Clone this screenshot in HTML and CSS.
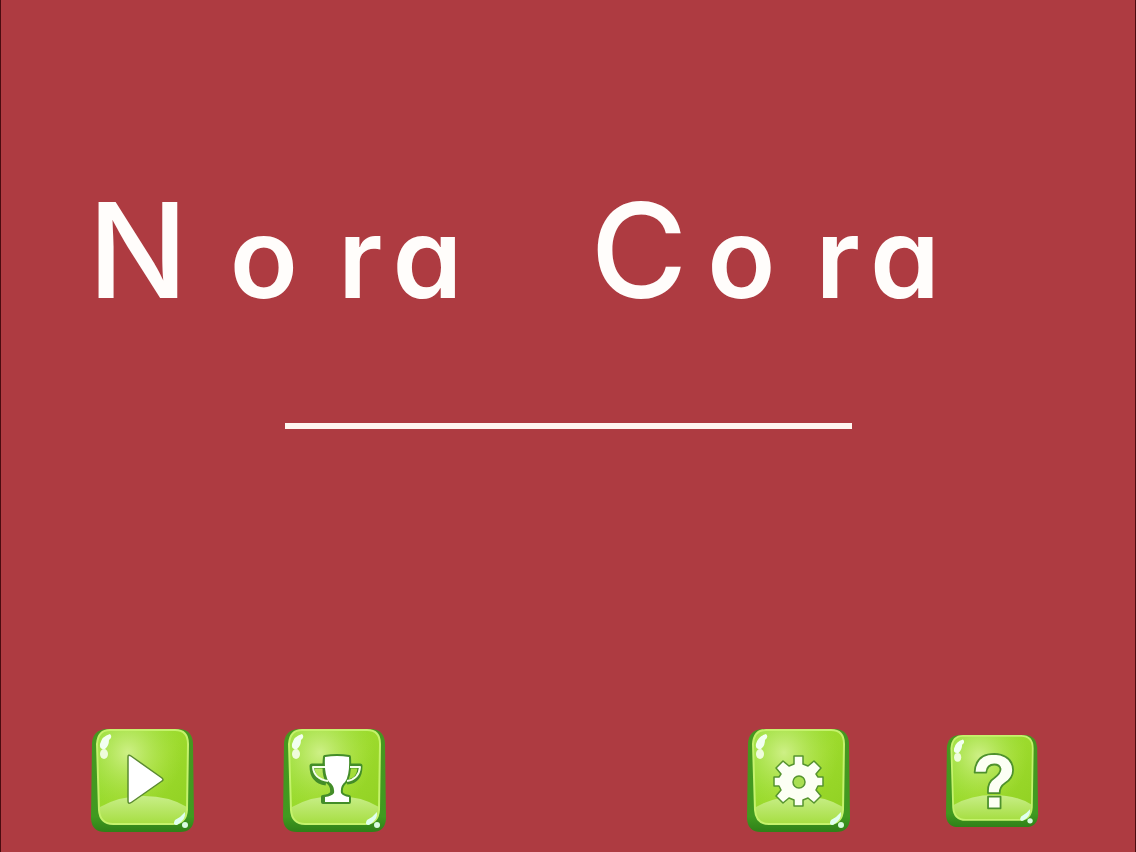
FILE: index.html
```html
<!DOCTYPE html>
<html lang="en">
<head>
  <meta charset="UTF-8">
  <meta name="viewport" content="width=device-width, initial-scale=1.0">
  <title>Nora Cora</title>
  <link rel="stylesheet" href="styles.css">
</head>
<body>
  <!-- Shared glossy button face -->
  <svg class="defs" aria-hidden="true">
    <defs>
      <linearGradient id="face" x1="0" y1="0" x2="1" y2="1">
        <stop offset="0" stop-color="#8fdc32" />
        <stop offset="0.5" stop-color="#9cda2c" />
        <stop offset="1" stop-color="#90d022" />
      </linearGradient>
      <radialGradient id="glow" cx="0.34" cy="0.24" r="0.6">
        <stop offset="0" stop-color="#d4f290" stop-opacity="0.9" />
        <stop offset="1" stop-color="#b4e650" stop-opacity="0" />
      </radialGradient>
      <linearGradient id="hill" x1="0" y1="0" x2="0" y2="1">
        <stop offset="0" stop-color="#c8ee88" />
        <stop offset="1" stop-color="#a6de42" />
      </linearGradient>
      <linearGradient id="side" x1="0" y1="0" x2="0" y2="1">
        <stop offset="0" stop-color="#46971f" />
        <stop offset="0.85" stop-color="#409a20" />
        <stop offset="1" stop-color="#2f8018" />
      </linearGradient>
      <symbol id="tile" viewBox="0 0 104 104">
        <path d="M15 0H89Q101 1 102 14L103 90Q102 103 89 103H14Q1 103 0 90L1 14Q2 1 15 0Z" fill="url(#side)" />
        <path d="M19 1H84Q97 1 97 15L96 81Q95 95 82 95H22Q9 95 8 81L6 15Q7 1 19 1Z" fill="url(#face)" />
        <path d="M19 1H84Q97 1 97 15L96 81Q95 95 82 95H22Q9 95 8 81L6 15Q7 1 19 1Z" fill="url(#glow)" />
        <path d="M9 78Q28 67 53 67Q78 67 96 78V82Q95 95 82 95H22Q9 95 8 81Z" fill="url(#hill)" />
        <path d="M19 1H84Q97 1 97 15L96 81Q95 95 82 95H22Q9 95 8 81L6 15Q7 1 19 1Z" fill="none" stroke="#c5f26c" stroke-width="2" />
        <path d="M19 5Q22 8 18 11Q18 17 14 20Q8 21 9 15Q11 7 19 5Z" fill="#f2fff0" />
        <ellipse cx="13" cy="25" rx="4" ry="5" fill="#effcdc" />
        <path d="M94 83Q95 91 86 96Q81 96 84 91Q90 88 94 83Z" fill="#e0fff0" />
        <circle cx="94" cy="96" r="3" fill="#d8fbe0" />
      </symbol>
    </defs>
  </svg>

  <main class="screen">
    <h1 class="title">
      <span class="word word-nora">
        <span class="cap">N</span>
        <span class="small">o</span>
        <span class="small pair"><span>r</span><span>a</span></span>
      </span>
      <span class="word word-cora">
        <span class="cap">C</span>
        <span class="small">o</span>
        <span class="small pair"><span>r</span><span>a</span></span>
      </span>
    </h1>

    <hr class="divider">

    <nav class="menu">
      <div class="group">
        <button class="tile" type="button" aria-label="Play">
          <svg viewBox="0 0 104 104">
            <use href="#tile" width="104" height="104" />
            <path d="M37 28Q37 25 40 27L71 49Q73 51 71 52L41 73Q37 76 37 72Z" fill="#fff" stroke="#5b8a31" stroke-width="1.5" stroke-linejoin="round" />
          </svg>
        </button>
        <button class="tile" type="button" aria-label="Trophies">
          <svg viewBox="0 0 104 104">
            <use href="#tile" width="104" height="104" />
            <path d="M41 37H29Q29 52 43 54M67 37H77Q77 52 64 53" fill="none" stroke="#438d28" stroke-width="5" stroke-linejoin="round" />
            <path d="M42 28Q54 26 66 28Q67 46 62 53Q57 57 58 64Q60 67 66 68V73H40V68Q47 67 49 64Q50 57 45 53Q40 46 42 28Z" fill="#438d28" stroke="#438d28" stroke-width="4" stroke-linejoin="round" />
            <path d="M43 38H30Q31 50 45 52M67 38H77Q76 50 64 52" fill="none" stroke="#f5ffe9" stroke-width="2" stroke-linejoin="round" />
            <path d="M42 28Q54 26 66 28Q67 46 62 53Q57 57 58 64Q60 67 66 68V73H42V68Q49 67 51 64Q52 57 46 53Q41 46 42 28Z" fill="#fff" />
          </svg>
        </button>
      </div>
      <div class="group">
        <button class="tile" type="button" aria-label="Settings">
          <svg viewBox="0 0 104 104">
            <use href="#tile" width="104" height="104" />
            <path d="M47 27H56V35L61 37L67 32L74 39L69 45L71 48H76V57H71L69 61L74 67L67 74L61 69L56 71V77H47V71L42 69L36 74L29 67L34 61L32 57H27V48H32L34 45L29 39L36 32L42 37L47 35Z" fill="#fcfff4" stroke="#56942f" stroke-width="1.5" stroke-linejoin="round" />
            <circle cx="52" cy="53" r="6" fill="#a9df52" stroke="#56942f" stroke-width="1.5" />
          </svg>
        </button>
        <button class="tile tile-help" type="button" aria-label="Help">
          <svg viewBox="0 0 104 104">
            <use href="#tile" width="104" height="104" />
            <path d="M32 42Q33 21 54 21Q74 22 75 39Q75 48 66 54Q60 58 60 65H47Q46 53 54 48Q61 43 61 38Q60 33 54 33Q46 33 45 42Z" fill="#fcfff4" stroke="#4e912d" stroke-width="2" stroke-linejoin="round" />
            <path d="M47 69H61V82H47Z" fill="#fcfff4" stroke="#4e912d" stroke-width="2" stroke-linejoin="round" />
          </svg>
        </button>
      </div>
    </nav>
  </main>
</body>
</html>
```
FILE: styles.css
```css
* {
  box-sizing: border-box;
}
body {
  margin: 0;
  background-color: #ae3b41;
  font-family: Inter, Lato, sans-serif;
}
.defs {
  position: absolute;
  width: 0;
  height: 0;
}
.screen {
  display: flex;
  flex-direction: column;
  min-height: 100vh;
  border-left: 1px solid #4a0c10;
  border-right: 1px solid #4a0c10;
}
.title {
  display: flex;
  gap: 128px;
  margin: 0;
  padding: 170px 0 0 87px;
  color: #fffdfb;
  font-weight: 500;
}
.word {
  display: flex;
  align-items: baseline;
}
.cap {
  font-size: 132px;
  line-height: 160px;
}
.word-nora .cap {
  margin-right: 42px;
}
.word-cora .cap {
  margin-right: 20px;
}
.small {
  font-size: 112px;
  line-height: 160px;
  font-weight: 600;
  font-feature-settings: "cv11";
}
.pair {
  display: flex;
  gap: 10px;
  margin-left: 40px;
}
.divider {
  width: 50%;
  height: 6px;
  margin: 86px auto 0;
  border: none;
  background-color: #fff6f0;
}
.menu {
  display: flex;
  justify-content: space-between;
  align-items: center;
  margin-top: auto;
  padding: 0 96px 19px 90px;
}
.group {
  display: flex;
  align-items: center;
  gap: 88px;
}
.group + .group {
  gap: 95px;
}
.tile {
  width: 104px;
  height: 104px;
  padding: 0;
  border: none;
  background: none;
  cursor: pointer;
}
.tile svg {
  display: block;
  width: 100%;
  height: 100%;
}
.tile-help {
  width: 93px;
  height: 93px;
}
.tile:hover {
  filter: brightness(1.08);
}
```
